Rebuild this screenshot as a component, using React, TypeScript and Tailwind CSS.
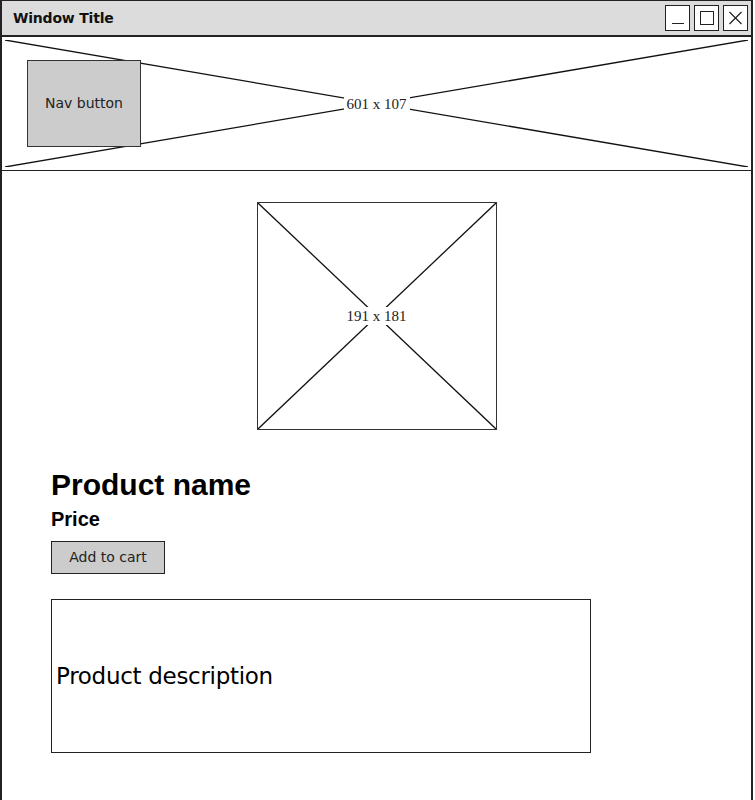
import { X } from 'lucide-react'

function Placeholder({ label, className }: { label: string; className?: string }) {
  return (
    <div className={`relative ${className ?? ''}`}>
      <svg className="absolute inset-0 h-full w-full" viewBox="0 0 100 100" preserveAspectRatio="none">
        <line x1="0" y1="0" x2="100" y2="100" stroke="#111" strokeWidth="1.3" vectorEffect="non-scaling-stroke" />
        <line x1="100" y1="0" x2="0" y2="100" stroke="#111" strokeWidth="1.3" vectorEffect="non-scaling-stroke" />
      </svg>
      <div className="absolute inset-0 flex items-center justify-center">
        <span className="bg-white px-[3px] text-[15px] leading-[18px] text-[#222] [font-family:'Liberation_Serif',serif]">
          {label}
        </span>
      </div>
    </div>
  )
}

export default function App() {
  return (
    <div className="h-[800px] w-[755px] overflow-hidden bg-white [font-family:'Liberation_Sans',sans-serif]">
      <div className="flex h-[800px] w-[753px] flex-col border-x-2 border-t border-[#222]">
        {/* title bar */}
        <div className="flex h-[36px] shrink-0 items-center justify-between border-b-2 border-[#222] bg-[#dcdcdc] pl-[11px] pr-[3px]">
          <span className="text-[14px] font-bold text-[#111] [font-family:'DejaVu_Sans',sans-serif] tracking-[-0.2px]">
            Window Title
          </span>
          <div className="flex gap-[4px]">
            <div className="flex h-[26px] w-[25px] items-end justify-center border border-[#222] bg-white pb-[6px]">
              <div className="h-[1px] w-[12px] bg-[#222]" />
            </div>
            <div className="flex h-[26px] w-[25px] items-center justify-center border border-[#222] bg-white">
              <div className="h-[14px] w-[14px] border border-[#222]" />
            </div>
            <div className="flex h-[26px] w-[25px] items-center justify-center border border-[#222] bg-white">
              <X className="h-[24px] w-[24px] text-[#222]" strokeWidth={1.2} />
            </div>
          </div>
        </div>

        {/* header banner */}
        <div className="relative h-[134px] shrink-0 border-b border-[#222] pl-[25px] pt-[23px]">
          <Placeholder label="601 x 107" className="!absolute inset-[3px]" />
          <div className="relative flex h-[87px] w-[114px] items-center justify-center border border-[#333] bg-[#cccccc] text-[14px] text-[#222] [font-family:'DejaVu_Sans',sans-serif]">
            Nav button
          </div>
        </div>

        {/* product image */}
        <div className="mt-[31px] flex justify-center">
          <Placeholder label="191 x 181" className="h-[228px] w-[240px] border border-[#333]" />
        </div>

        {/* product info */}
        <div className="flex flex-col items-start pl-[49px]">
          <h1 className="mt-[38px] text-[30px] font-bold leading-[34px] text-black">Product name</h1>
          <p className="mt-[5px] text-[20px] font-bold leading-[24px] text-black">Price</p>
          <button className="mt-[10px] flex h-[33px] w-[114px] items-center justify-center border border-[#222] bg-[#cccccc] text-[14px] text-[#222] [font-family:'DejaVu_Sans',sans-serif]">
            Add to cart
          </button>
          <div className="mt-[25px] flex h-[154px] w-[540px] items-center border border-[#222] pl-[4px]">
            <span className="text-[23px] text-black [font-family:'DejaVu_Sans',sans-serif] tracking-[-0.3px]">
              Product description
            </span>
          </div>
        </div>
      </div>
    </div>
  )
}
